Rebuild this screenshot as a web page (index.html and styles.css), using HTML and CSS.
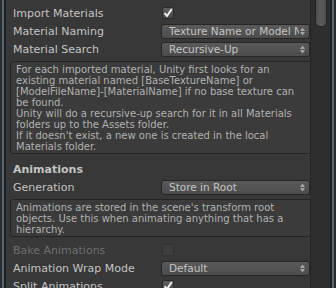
FILE: index.html
```html
<!DOCTYPE html>
<html>
	<head>
		<title>Model Import Settings</title>
		<meta name="viewport" content="width=device-width, initial-scale=1.0">
		<link rel="stylesheet" href="styles.css">
	</head>
	<body>
		<div class="frame">
			<div class="edge left"></div>
			<div class="inspector">
				<div class="row">
					<span class="label">Import Materials</span>
					<span class="check on"><svg width="10" height="10" viewBox="0 0 10 10"><path d="M1.5 5.2 L4 8 L8.8 1" fill="none" stroke="#f0f0f0" stroke-width="2"/></svg></span>
				</div>
				<div class="row">
					<span class="label">Material Naming</span>
					<span class="popup"><span class="value">Texture Name or Model Name</span><svg class="arrows" width="5" height="9" viewBox="0 0 5 9"><path d="M0 4 L2.5 0.5 L5 4 Z M0 5 L2.5 8.5 L5 5 Z" fill="#a6a6a6"/></svg></span>
				</div>
				<div class="row">
					<span class="label">Material Search</span>
					<span class="popup"><span class="value">Recursive-Up</span><svg class="arrows" width="5" height="9" viewBox="0 0 5 9"><path d="M0 4 L2.5 0.5 L5 4 Z M0 5 L2.5 8.5 L5 5 Z" fill="#a6a6a6"/></svg></span>
				</div>
				<div class="helpbox big">
					For each imported material, Unity first looks for an<br>
					existing material named [BaseTextureName] or<br>
					[ModelFileName]-[MaterialName] if no base texture can<br>
					be found.<br>
					Unity will do a recursive-up search for it in all Materials<br>
					folders up to the Assets folder.<br>
					If it doesn't exist, a new one is created in the local<br>
					Materials folder.
				</div>
				<div class="row heading">Animations</div>
				<div class="row">
					<span class="label">Generation</span>
					<span class="popup"><span class="value">Store in Root</span><svg class="arrows" width="5" height="9" viewBox="0 0 5 9"><path d="M0 4 L2.5 0.5 L5 4 Z M0 5 L2.5 8.5 L5 5 Z" fill="#a6a6a6"/></svg></span>
				</div>
				<div class="helpbox">
					Animations are stored in the scene's transform root<br>
					objects. Use this when animating anything that has a<br>
					hierarchy.
				</div>
				<div class="row gap">
					<span class="label disabled">Bake Animations</span>
					<span class="check off"></span>
				</div>
				<div class="row">
					<span class="label">Animation Wrap Mode</span>
					<span class="popup"><span class="value">Default</span><svg class="arrows" width="5" height="9" viewBox="0 0 5 9"><path d="M0 4 L2.5 0.5 L5 4 Z M0 5 L2.5 8.5 L5 5 Z" fill="#a6a6a6"/></svg></span>
				</div>
				<div class="row">
					<span class="label">Split Animations</span>
					<span class="check on"><svg width="10" height="10" viewBox="0 0 10 10"><path d="M1.5 5.2 L4 8 L8.8 1" fill="none" stroke="#f0f0f0" stroke-width="2"/></svg></span>
				</div>
			</div>
			<div class="scrollbar"><div class="thumb"></div></div>
			<div class="edge right"></div>
		</div>
	</body>
</html>
```
FILE: styles.css
```css
body {
	margin: 0px;
	background: #383838;
	font-family: 'DejaVu Sans', sans-serif;
	font-size: 11px;
	color: #c4c4c4;
	overflow: hidden;
}
.frame {
	display: flex;
	height: 288px;
}
.edge {
	flex: none;
	width: 6px;
}
.edge.left {
	background: linear-gradient(90deg, #2c2c2c 0px, #2c2c2c 2px, #56677a 2px, #56677a 4px, #1f1f1f 4px, #1f1f1f 6px);
}
.edge.right {
	background: linear-gradient(90deg, #222222 0px, #222222 2px, #56677a 2px, #56677a 4px, #2a2a2a 4px);
}
.inspector {
	flex: 1;
	padding: 4px 0px 0px 7px;
	overflow: hidden;
}
.row {
	display: flex;
	align-items: center;
	height: 18px;
}
.label {
	flex: none;
	width: 149px;
	white-space: nowrap;
}
.disabled {
	color: #6e6e6e;
}
.heading {
	margin-top: 6px;
	font-weight: bold;
}
.gap {
	margin-top: 4px;
}
.check {
	display: flex;
	width: 10px;
	height: 10px;
	border: 1px solid #2a2a2a;
	border-radius: 2px;
	background: linear-gradient(180deg, #5e5e5e 0%, #4a4a4a 100%);
}
.check.off {
	background: #3e3e3e;
	border-color: #333333;
}
.popup {
	display: flex;
	align-items: center;
	width: 136px;
	height: 13px;
	margin-left: -1px;
	padding: 0px 4px 0px 7px;
	border: 1px solid #262626;
	border-radius: 3px;
	background: linear-gradient(180deg, #5a5a5a 0%, #4c4c4c 100%);
	overflow: hidden;
}
.value {
	flex: 1;
	font-size: 10.5px;
	line-height: 13px;
	white-space: nowrap;
	overflow: hidden;
}
.arrows {
	flex: none;
	margin-left: 1px;
}
.helpbox {
	margin: 3px 0px 0px -3px;
	width: 291px;
	padding: 2px 4px 1px 5px;
	border: 1px solid #242424;
	border-radius: 3px;
	background: #3b3b3b;
	font-size: 10px;
	line-height: 11px;
	color: #b2b2b2;
	white-space: nowrap;
}
.scrollbar {
	flex: none;
	width: 19px;
	background: #2e2e2e;
	border-left: 1px solid #262626;
}
.thumb {
	width: 10px;
	height: 26px;
	margin-left: 4px;
	border-radius: 0px 0px 5px 5px;
	background: linear-gradient(90deg, #4e4e4e 0%, #5c5c5c 50%, #4e4e4e 100%);
	border: 1px solid #232323;
	border-top: none;
}
```
